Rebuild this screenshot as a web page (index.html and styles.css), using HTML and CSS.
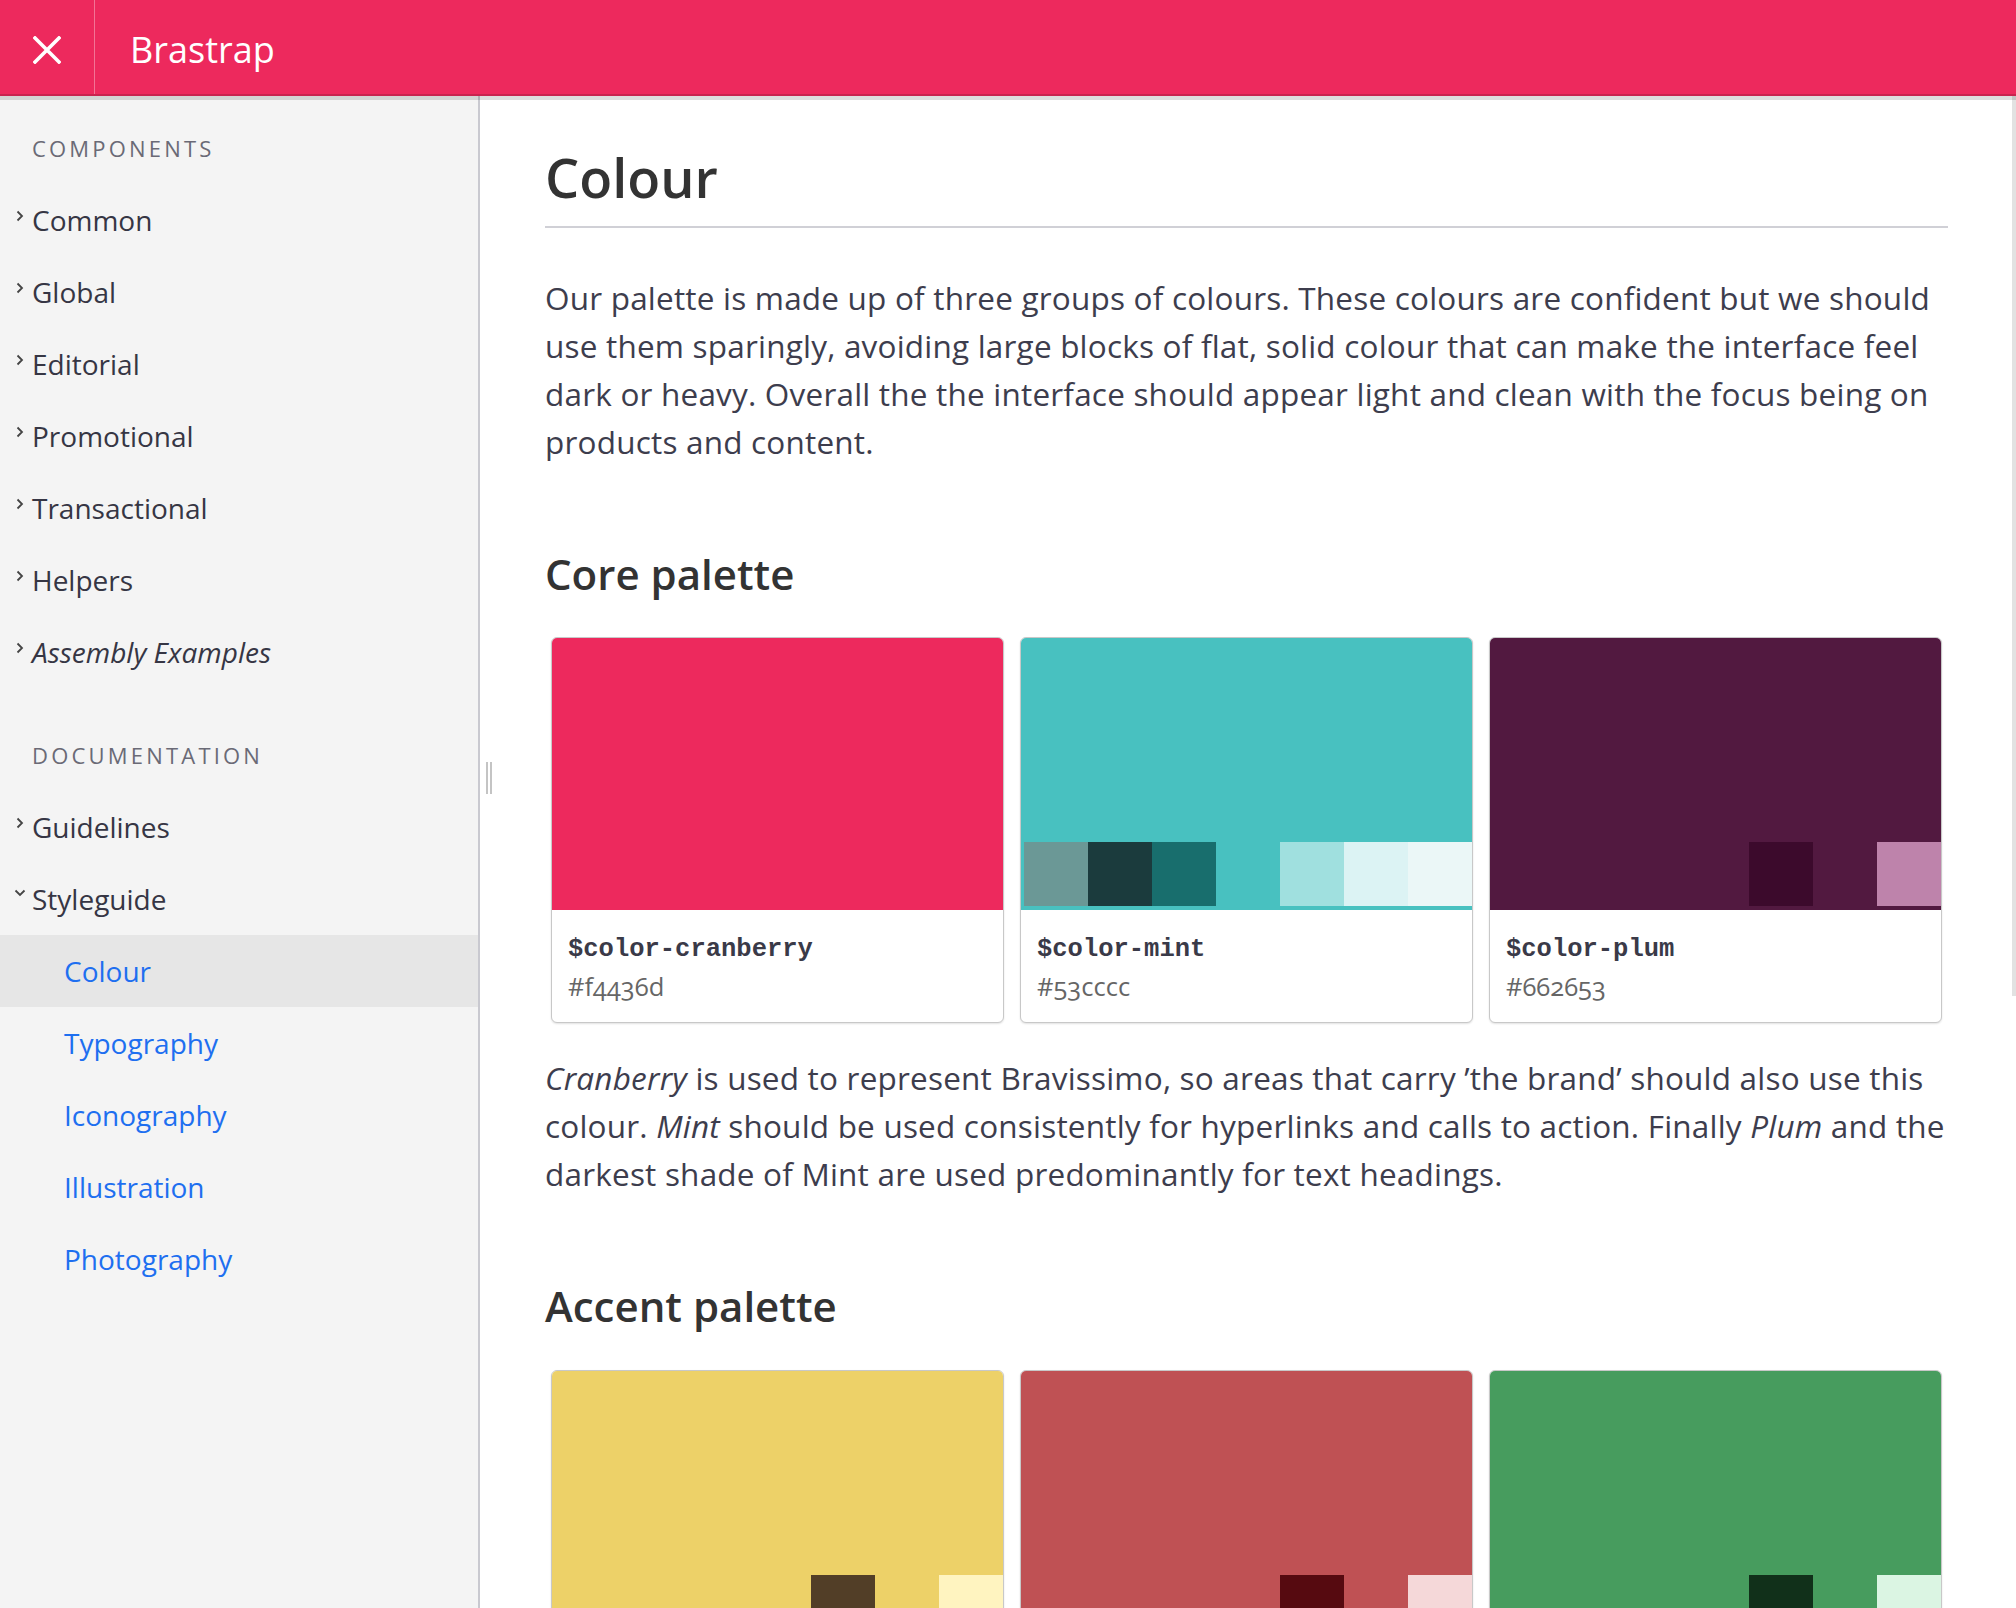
FILE: index.html
```html
<!DOCTYPE html>
<html lang="en">
<head>
<meta charset="utf-8">
<title>Brastrap – Colour</title>
<link rel="stylesheet" href="styles.css">
</head>
<body>
<header class="topbar">
  <button class="close-btn" aria-label="Close menu">
    <svg width="28" height="28" viewBox="0 0 28 28"><path d="M2 2 L26 26 M26 2 L2 26" stroke="#fff" stroke-width="3.6" stroke-linecap="square" fill="none"/></svg>
  </button>
  <div class="brand">Brastrap</div>
</header>
<div class="layout">
  <nav class="sidebar">
    <div class="nav-heading">Components</div>
    <ul class="nav-list">
      <li><a class="nav-item"><span class="chev"><svg width="8" height="12" viewBox="0 0 8 12"><path d="M1.5 1.5 L6 6 L1.5 10.5" stroke="#444" stroke-width="1.8" fill="none"/></svg></span>Common</a></li>
      <li><a class="nav-item"><span class="chev"><svg width="8" height="12" viewBox="0 0 8 12"><path d="M1.5 1.5 L6 6 L1.5 10.5" stroke="#444" stroke-width="1.8" fill="none"/></svg></span>Global</a></li>
      <li><a class="nav-item"><span class="chev"><svg width="8" height="12" viewBox="0 0 8 12"><path d="M1.5 1.5 L6 6 L1.5 10.5" stroke="#444" stroke-width="1.8" fill="none"/></svg></span>Editorial</a></li>
      <li><a class="nav-item"><span class="chev"><svg width="8" height="12" viewBox="0 0 8 12"><path d="M1.5 1.5 L6 6 L1.5 10.5" stroke="#444" stroke-width="1.8" fill="none"/></svg></span>Promotional</a></li>
      <li><a class="nav-item"><span class="chev"><svg width="8" height="12" viewBox="0 0 8 12"><path d="M1.5 1.5 L6 6 L1.5 10.5" stroke="#444" stroke-width="1.8" fill="none"/></svg></span>Transactional</a></li>
      <li><a class="nav-item"><span class="chev"><svg width="8" height="12" viewBox="0 0 8 12"><path d="M1.5 1.5 L6 6 L1.5 10.5" stroke="#444" stroke-width="1.8" fill="none"/></svg></span>Helpers</a></li>
      <li><a class="nav-item nav-item--em"><span class="chev"><svg width="8" height="12" viewBox="0 0 8 12"><path d="M1.5 1.5 L6 6 L1.5 10.5" stroke="#444" stroke-width="1.8" fill="none"/></svg></span>Assembly Examples</a></li>
    </ul>
    <div class="nav-heading nav-heading--spaced">Documentation</div>
    <ul class="nav-list">
      <li><a class="nav-item"><span class="chev"><svg width="8" height="12" viewBox="0 0 8 12"><path d="M1.5 1.5 L6 6 L1.5 10.5" stroke="#444" stroke-width="1.8" fill="none"/></svg></span>Guidelines</a></li>
      <li><a class="nav-item"><span class="chev chev--open"><svg width="12" height="8" viewBox="0 0 12 8"><path d="M1.5 1.5 L6 6 L10.5 1.5" stroke="#444" stroke-width="1.8" fill="none"/></svg></span>Styleguide</a>
        <ul class="sub-list">
          <li><a class="sub-item is-active">Colour</a></li>
          <li><a class="sub-item">Typography</a></li>
          <li><a class="sub-item">Iconography</a></li>
          <li><a class="sub-item">Illustration</a></li>
          <li><a class="sub-item">Photography</a></li>
        </ul>
      </li>
    </ul>
    <div class="resize-handle"></div>
  </nav>
  <main class="content">
    <h1 class="page-title">Colour</h1>
    <p class="lead">Our palette is made up of three groups of colours. These colours are confident but we should use them sparingly, avoiding large blocks of flat, solid colour that can make the interface feel dark or heavy. Overall the the interface should appear light and clean with the focus being on products and content.</p>

    <h2 class="section-title">Core palette</h2>
    <div class="swatch-grid">
      <div class="swatch-card">
        <div class="swatch swatch--cranberry"><div class="shades"></div></div>
        <div class="swatch-info"><code class="swatch-name">$color-cranberry</code><div class="swatch-hex">#f4436d</div></div>
      </div>
      <div class="swatch-card">
        <div class="swatch swatch--mint">
          <div class="shades">
            <span class="shade" style="background:#6b9896"></span>
            <span class="shade" style="background:#1b3b3d"></span>
            <span class="shade" style="background:#186e6d"></span>
            <span class="shade"></span>
            <span class="shade" style="background:#a0e0df"></span>
            <span class="shade" style="background:#dcf3f4"></span>
            <span class="shade" style="background:#ebf7f7"></span>
          </div>
        </div>
        <div class="swatch-info"><code class="swatch-name">$color-mint</code><div class="swatch-hex">#53cccc</div></div>
      </div>
      <div class="swatch-card">
        <div class="swatch swatch--plum">
          <div class="shades">
            <span class="shade" style="background:#3c0a2c"></span>
            <span class="shade"></span>
            <span class="shade" style="background:#be83ab"></span>
          </div>
        </div>
        <div class="swatch-info"><code class="swatch-name">$color-plum</code><div class="swatch-hex">#662653</div></div>
      </div>
    </div>

    <p class="lead lead--after"><em>Cranberry</em> is used to represent Bravissimo, so areas that carry ’the brand’ should also use this colour. <em>Mint</em> should be used consistently for hyperlinks and calls to action. Finally <em>Plum</em> and the darkest shade of Mint are used predominantly for text headings.</p>

    <h2 class="section-title">Accent palette</h2>
    <div class="swatch-grid">
      <div class="swatch-card">
        <div class="swatch swatch--yellow">
          <div class="shades">
            <span class="shade" style="background:#523e27"></span>
            <span class="shade"></span>
            <span class="shade" style="background:#fff4c0"></span>
          </div>
        </div>
        <div class="swatch-info"><code class="swatch-name">$color-yellow</code><div class="swatch-hex">#f4d76b</div></div>
      </div>
      <div class="swatch-card">
        <div class="swatch swatch--red">
          <div class="shades">
            <span class="shade" style="background:#560a10"></span>
            <span class="shade"></span>
            <span class="shade" style="background:#f5d8d9"></span>
          </div>
        </div>
        <div class="swatch-info"><code class="swatch-name">$color-red</code><div class="swatch-hex">#c75156</div></div>
      </div>
      <div class="swatch-card">
        <div class="swatch swatch--green">
          <div class="shades">
            <span class="shade" style="background:#11301a"></span>
            <span class="shade"></span>
            <span class="shade" style="background:#dbf5e3"></span>
          </div>
        </div>
        <div class="swatch-info"><code class="swatch-name">$color-green</code><div class="swatch-hex">#4aa362</div></div>
      </div>
    </div>
  </main>
  <div class="scroll-thumb"></div>
</div>
</body>
</html>
```
FILE: styles.css
```css
* { box-sizing: border-box; }

html, body {
  margin: 0;
  padding: 0;
  height: 1608px;
  overflow: hidden;
  background: #fff;
  font-family: "Open Sans", "Noto Sans", sans-serif;
  color: #3d3d4d;
}

/* ---------- top bar ---------- */
.topbar {
  position: relative;
  z-index: 2;
  display: flex;
  align-items: stretch;
  height: 96px;
  background: #ed295d;
  border-bottom: 2px solid #c9234f;
  box-shadow: 0 4px 0 rgba(0, 0, 0, 0.13);
}

.close-btn {
  width: 95px;
  border: 0;
  border-right: 1px solid rgba(255, 255, 255, 0.35);
  background: transparent;
  padding: 5px 0 0;
  display: flex;
  align-items: center;
  justify-content: center;
}

.brand {
  padding-top: 3px;
  padding-left: 35px;
  font-size: 36px;
  line-height: 94px;
  color: #fff;
}

/* ---------- layout ---------- */
.layout {
  position: relative;
  display: grid;
  grid-template-columns: 480px 1fr;
  height: 1512px;
}

/* ---------- sidebar ---------- */
.sidebar {
  position: relative;
  background: #f4f4f4;
  border-right: 2px solid #c9c9d0;
  padding-top: 16px;
}

.nav-heading {
  padding-left: 32px;
  height: 72px;
  line-height: 72px;
  font-size: 22px;
  letter-spacing: 3.2px;
  text-transform: uppercase;
  color: #6a6a76;
}

.nav-heading--spaced { margin-top: 31px; }

.nav-list, .sub-list {
  list-style: none;
  margin: 0;
  padding: 0;
}

.nav-item {
  display: flex;
  align-items: center;
  height: 72px;
  font-size: 28px;
  color: #363644;
}

.nav-item--em { font-style: italic; }

.chev {
  width: 32px;
  padding-left: 16px;
  display: flex;
  margin-top: -8px;
}

.chev--open {
  padding-left: 14px;
  margin-top: -12px;
}

.sub-item {
  display: block;
  height: 72px;
  line-height: 72px;
  padding-left: 64px;
  font-size: 28px;
  color: #1e6ff0;
}

.sub-item.is-active { background: #e6e6e6; }

.resize-handle {
  position: absolute;
  top: 666px;
  right: -14px;
  width: 6px;
  height: 32px;
  border-left: 2px solid #c4c4c4;
  border-right: 2px solid #c4c4c4;
}

/* ---------- content ---------- */
.content {
  padding: 49px 68px 0 65px;
}

.page-title {
  margin: 0;
  font-size: 54px;
  font-weight: 600;
  line-height: 1.2;
  color: #333;
  padding-bottom: 16px;
  border-bottom: 2px solid #d0d0d6;
}

.lead {
  margin: 46px -24px 0 0;
  font-size: 31.5px;
  letter-spacing: 0.2px;
  line-height: 48px;
}

.lead--after { margin-top: 31px; }

.section-title {
  margin: 83px 0 0;
  font-size: 42px;
  font-weight: 600;
  line-height: 1.2;
  color: #333;
}

.swatch-grid {
  display: grid;
  grid-template-columns: repeat(3, 1fr);
  column-gap: 16px;
  padding: 0 6px;
  margin-top: 38px;
}

.swatch-card {
  border: 1px solid #c8c8c8;
  border-radius: 6px;
  overflow: hidden;
  background: #fff;
  box-shadow: 0 1px 2px rgba(0, 0, 0, 0.12);
}

.swatch {
  height: 272px;
  display: flex;
  flex-direction: column;
  justify-content: flex-end;
  padding-bottom: 4px;
}

.swatch--cranberry { background: #ed295d; }
.swatch--mint { background: #48c1c0; }
.swatch--plum { background: #521940; }
.swatch--yellow { background: #edd168; }
.swatch--red { background: #bf5154; }
.swatch--green { background: #479c5e; }

.shades {
  display: flex;
  justify-content: flex-end;
  height: 64px;
}

.shade {
  width: 64px;
  height: 64px;
}

.swatch-info {
  padding: 24px 16px 16px;
}

.swatch-name {
  display: block;
  font-family: "Liberation Mono", "Courier New", monospace;
  font-weight: bold;
  font-size: 25.5px;
  line-height: 32px;
  color: #3a3a48;
}

.swatch-hex {
  margin-top: 0;
  font-size: 25.5px;
  line-height: 40px;
  color: #666;
  font-variant-numeric: oldstyle-nums;
}

.scroll-thumb {
  position: absolute;
  top: 0;
  right: 0;
  width: 4px;
  height: 900px;
  background: #e2e2e2;
}
```
